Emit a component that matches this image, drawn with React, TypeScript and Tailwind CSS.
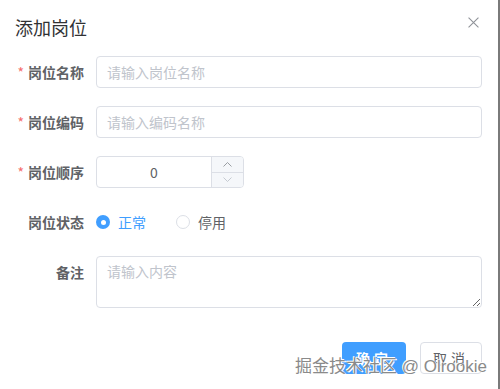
import React from "react";

const font = { fontFamily: '"Noto Sans CJK SC", "Noto Sans", sans-serif' };

function Label({ text, required }: { text: string; required?: boolean }) {
  return (
    <div className="w-[84px] shrink-0 flex items-center justify-end text-[14px] font-bold text-[#606266]">
      {required && <span className="text-[#f56c6c] mr-[4px] font-normal">*</span>}
      {text}
    </div>
  );
}

function TextInput({ placeholder }: { placeholder: string }) {
  return (
    <input
      placeholder={placeholder}
      className="w-[386px] h-[32px] rounded-[4px] border border-[#dcdfe6] px-[10px] text-[14px] text-[#606266] placeholder:text-[#c0c4cc] outline-none"
      style={font}
    />
  );
}

function Radio({ label, checked }: { label: string; checked?: boolean }) {
  return (
    <label className="flex items-center gap-[8px] cursor-pointer">
      {checked ? (
        <span className="w-[14px] h-[14px] rounded-full bg-[#409eff] flex items-center justify-center">
          <span className="w-[5px] h-[5px] rounded-full bg-white" />
        </span>
      ) : (
        <span className="w-[14px] h-[14px] rounded-full border border-[#dcdfe6] bg-white" />
      )}
      <span className={checked ? "text-[#409eff]" : "text-[#606266]"}>{label}</span>
    </label>
  );
}

export default function App() {
  return (
    <div
      className="relative w-[500px] h-[389px] bg-white border-r-2 border-[#7a7a7a] overflow-hidden"
      style={font}
    >
      {/* header */}
      <div className="flex items-start justify-between pl-[15px] pr-[19px] pt-[14px] h-[42px]">
        <span className="text-[18px] leading-[26px] text-[#303133]">添加岗位</span>
        <svg width="11" height="11" viewBox="0 0 10 10" className="mt-[3px]">
          <path d="M0.5 0.5 L9.5 9.5 M9.5 0.5 L0.5 9.5" stroke="#909399" strokeWidth="1" />
        </svg>
      </div>

      {/* form */}
      <div className="flex flex-col gap-[18px] pt-[14px]">
        <div className="flex items-center gap-[12px]">
          <Label text="岗位名称" required />
          <TextInput placeholder="请输入岗位名称" />
        </div>
        <div className="flex items-center gap-[12px]">
          <Label text="岗位编码" required />
          <TextInput placeholder="请输入编码名称" />
        </div>
        <div className="flex items-center gap-[12px]">
          <Label text="岗位顺序" required />
          <div className="flex w-[148px] h-[32px] rounded-[4px] border border-[#dcdfe6] overflow-hidden">
            <div className="flex-1 flex items-center justify-center text-[14px] text-[#606266]">0</div>
            <div className="w-[32px] flex flex-col bg-[#f5f7fa] border-l border-[#dcdfe6]">
              <div className="flex-1 flex items-center justify-center border-b border-[#dcdfe6]">
                <svg width="9" height="5" viewBox="0 0 9 5">
                  <path d="M0.5 4.5 L4.5 0.5 L8.5 4.5" fill="none" stroke="#909399" strokeWidth="0.9" />
                </svg>
              </div>
              <div className="flex-1 flex items-center justify-center">
                <svg width="9" height="5" viewBox="0 0 9 5">
                  <path d="M0.5 0.5 L4.5 4.5 L8.5 0.5" fill="none" stroke="#c0c4cc" strokeWidth="0.9" />
                </svg>
              </div>
            </div>
          </div>
        </div>
        <div className="flex items-center gap-[12px] h-[32px]">
          <Label text="岗位状态" />
          <div className="flex items-center gap-[30px] text-[14px]">
            <Radio label="正常" checked />
            <Radio label="停用" />
          </div>
        </div>
        <div className="flex items-start gap-[12px]">
          <div className="pt-[6px]">
            <Label text="备注" />
          </div>
          <textarea
            placeholder="请输入内容"
            className="w-[386px] h-[52px] rounded-[4px] border border-[#dcdfe6] px-[10px] py-[4px] text-[14px] text-[#606266] placeholder:text-[#c0c4cc] outline-none"
            style={font}
          />
        </div>
      </div>

      {/* footer */}
      <div className="flex justify-end gap-[14px] pr-[16px] pt-[34px]">
        <button className="w-[64px] h-[32px] rounded-[4px] bg-[#409eff] text-white text-[14px] font-bold tracking-[4px]">
          确定
        </button>
        <button className="w-[62px] h-[32px] rounded-[4px] border border-[#dcdfe6] bg-white text-[#606266] text-[14px] tracking-[4px]">
          取消
        </button>
      </div>

      {/* watermark */}
      <div
        className="absolute left-[295px] top-[355px] text-[17px] leading-[24px] text-[#8a8a8a] whitespace-nowrap"
        style={{
          fontFamily: '"Liberation Sans", "Noto Sans CJK SC", sans-serif',
          textShadow: "0 0 1px #fff, 0 0 1px #fff, 1px 1px 0 #fff, -1px -1px 0 #fff",
        }}
      >
        掘金技术社区 @ Olrookie
      </div>
    </div>
  );
}
